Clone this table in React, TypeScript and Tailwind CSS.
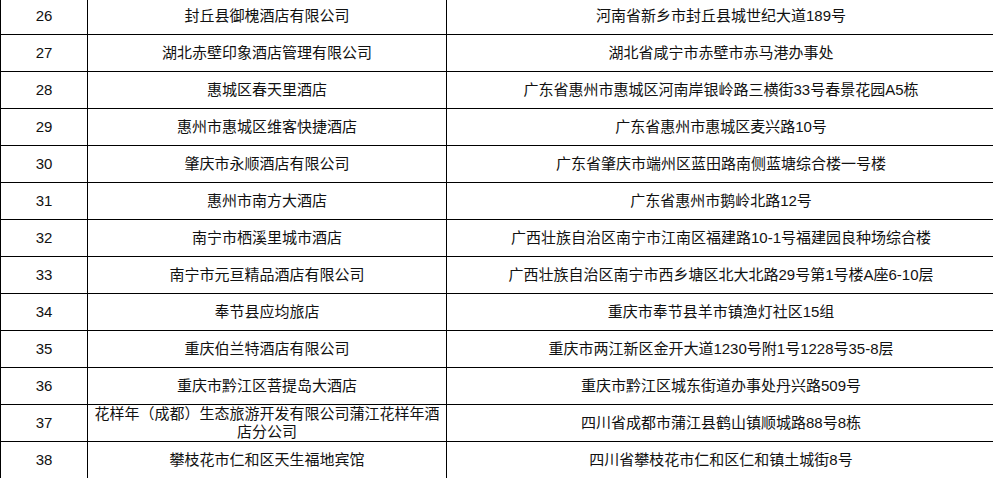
import React from "react";

/** 酒店名单行数据 */
const rows: { no: number; name: React.ReactNode; addr: string }[] = [
  { no: 26, name: "封丘县御槐酒店有限公司", addr: "河南省新乡市封丘县城世纪大道189号" },
  { no: 27, name: "湖北赤壁印象酒店管理有限公司", addr: "湖北省咸宁市赤壁市赤马港办事处" },
  { no: 28, name: "惠城区春天里酒店", addr: "广东省惠州市惠城区河南岸银岭路三横街33号春景花园A5栋" },
  { no: 29, name: "惠州市惠城区维客快捷酒店", addr: "广东省惠州市惠城区麦兴路10号" },
  { no: 30, name: "肇庆市永顺酒店有限公司", addr: "广东省肇庆市端州区蓝田路南侧蓝塘综合楼一号楼" },
  { no: 31, name: "惠州市南方大酒店", addr: "广东省惠州市鹅岭北路12号" },
  { no: 32, name: "南宁市栖溪里城市酒店", addr: "广西壮族自治区南宁市江南区福建路10-1号福建园良种场综合楼" },
  { no: 33, name: "南宁市元亘精品酒店有限公司", addr: "广西壮族自治区南宁市西乡塘区北大北路29号第1号楼A座6-10层" },
  { no: 34, name: "奉节县应均旅店", addr: "重庆市奉节县羊市镇渔灯社区15组" },
  { no: 35, name: "重庆伯兰特酒店有限公司", addr: "重庆市两江新区金开大道1230号附1号1228号35-8层" },
  { no: 36, name: "重庆市黔江区菩提岛大酒店", addr: "重庆市黔江区城东街道办事处丹兴路509号" },
  {
    no: 37,
    name: (
      <>
        花样年（成都）生态旅游开发有限公司蒲江花样年酒
        <br />
        店分公司
      </>
    ),
    addr: "四川省成都市蒲江县鹤山镇顺城路88号8栋",
  },
  { no: 38, name: "攀枝花市仁和区天生福地宾馆", addr: "四川省攀枝花市仁和区仁和镇土城街8号" },
];

export default function App() {
  return (
    <div className="w-[993px] h-[478px] overflow-hidden bg-white">
      {/* 表格宽度略超出视口，右边框不可见 */}
      <table
        className="-mt-[3px] w-[996px] border-collapse table-fixed text-[15px] text-[#111] leading-[18px]"
        style={{ fontFamily: '"Liberation Sans", "Noto Sans CJK SC", sans-serif' }}
      >
        <colgroup>
          <col className="w-[87px]" />
          <col className="w-[359px]" />
          <col />
        </colgroup>
        <tbody>
          {rows.map((r) => (
            <tr key={r.no} className="h-[37px]">
              <td className="border border-black text-center p-0">{r.no}</td>
              <td className="border border-black text-center px-1 py-0">{r.name}</td>
              <td className="border border-black text-center px-1 py-0">{r.addr}</td>
            </tr>
          ))}
        </tbody>
      </table>
    </div>
  );
}
